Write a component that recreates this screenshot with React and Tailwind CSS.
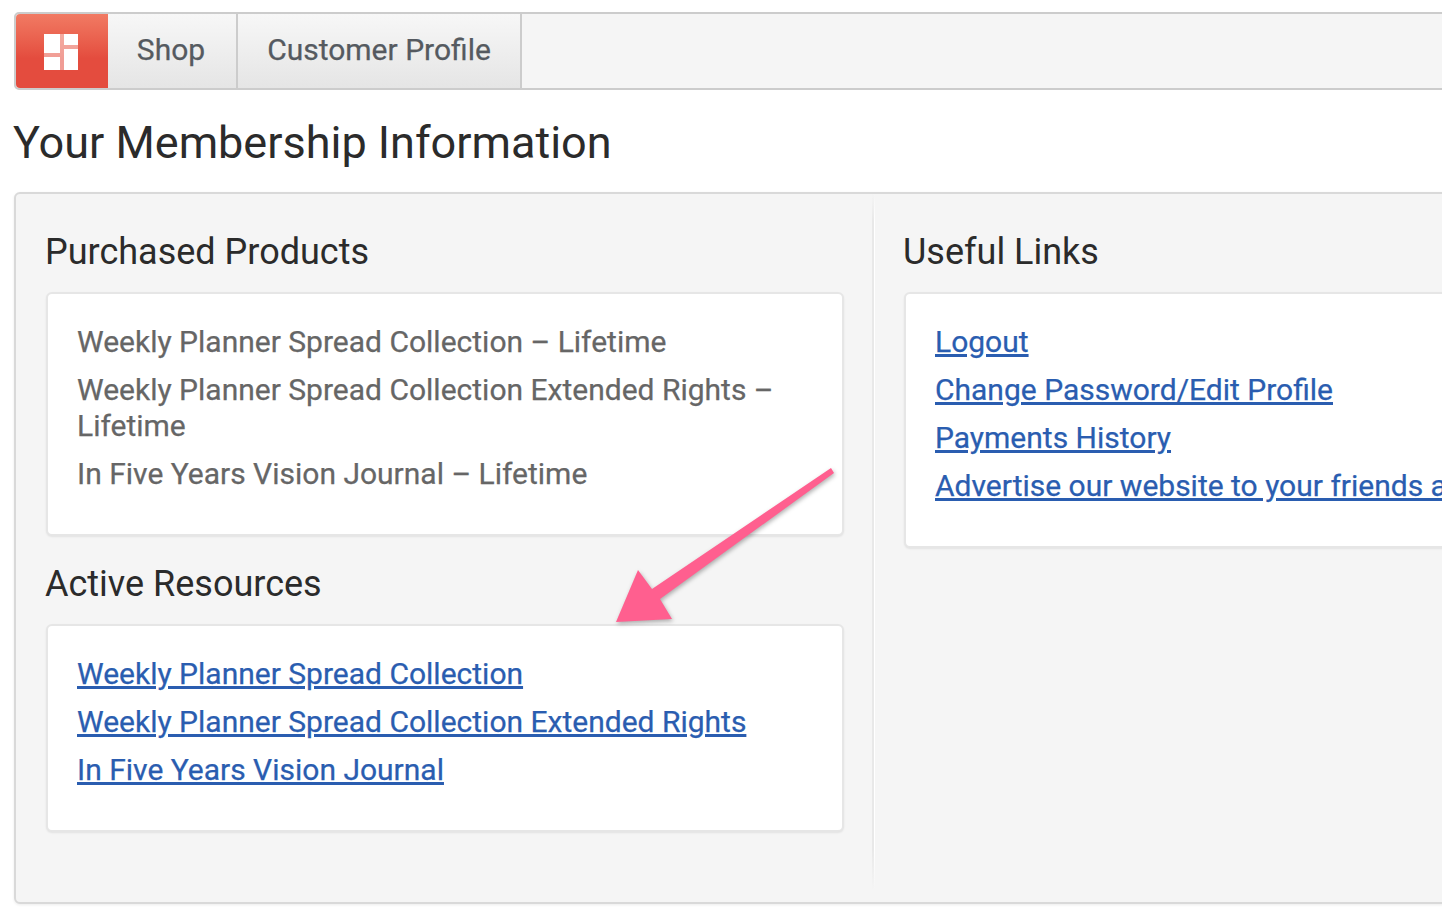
export default function App() {
  const linkCls = "text-[#2a5db0] underline";
  const cardCls = "rounded-[6px] border-2 border-[#e6e6e6] bg-white shadow-[0_1px_2px_rgba(0,0,0,0.08)] [-webkit-text-stroke:0.25px]";
  const headCls = "-ml-px h-[44px] text-[36px] leading-[44px] font-normal text-[#2b2b2b]";
  return (
    <div className="relative h-[924px] w-[1442px] overflow-hidden bg-white pl-[14px] pt-[12px] font-['Roboto',sans-serif]">
      <div className="w-[1500px]">
        <nav className="flex h-[78px] rounded-[5px] border-2 border-[#cccccc] bg-[#f5f5f5]">
          <a className="flex w-[92px] items-center justify-center rounded-l-[4px] bg-gradient-to-b from-[#f17a63] from-0% to-[#e44c3e] to-60%">
            <svg className="mr-[2px] mt-[2px]" width="34" height="36" viewBox="0 0 34 36">
              <rect x="16" y="0" width="4" height="36" fill="#fff" fillOpacity="0.45" />
              <rect x="0" y="19" width="16" height="4" fill="#fff" fillOpacity="0.45" />
              <rect x="20" y="11" width="14" height="4" fill="#fff" fillOpacity="0.45" />
              <rect x="0" y="0" width="16" height="19" fill="#fff" />
              <rect x="20" y="0" width="14" height="11" fill="#fff" />
              <rect x="0" y="23" width="16" height="13" fill="#fff" />
              <rect x="20" y="15" width="14" height="21" fill="#fff" />
            </svg>
          </a>
          <a className="flex w-[130px] items-center justify-center border-r-2 border-[#cccccc] bg-gradient-to-b from-[#f7f7f7] to-[#e5e5e5] pb-[4px] pr-[2px] text-[30px] text-[#555a60] [-webkit-text-stroke:0.25px]">Shop</a>
          <a className="flex w-[284px] items-center justify-center border-r-2 border-[#cccccc] bg-gradient-to-b from-[#f7f7f7] to-[#e5e5e5] pb-[4px] text-[30px] text-[#555a60] [-webkit-text-stroke:0.25px]">Customer Profile</a>
        </nav>
        <h1 className="-ml-px mt-[26px] h-[54px] text-[45px] leading-[54px] font-normal text-[#2b2b2b]">Your Membership Information</h1>
        <div className="mt-[22px] flex h-[712px] rounded-[6px] border-2 border-[#d9d9d9] bg-[#f5f5f5] shadow-[0_1px_3px_rgba(0,0,0,0.08)]">
          <section className="h-[696px] w-[856px] shrink-0 pl-[30px] pr-[28px]">
            <h2 className={"mt-[36px] " + headCls}>Purchased Products</h2>
            <div className={"mt-[18px] h-[244px] px-[29px] pt-[30px] text-[30px] leading-[36px] text-[#666666] " + cardCls}>
              <p className="mb-[12px]">Weekly Planner Spread Collection – Lifetime</p>
              <p className="mb-[12px]">Weekly Planner Spread Collection Extended Rights – Lifetime</p>
              <p>In Five Years Vision Journal – Lifetime</p>
            </div>
            <h2 className={"mt-[26px] " + headCls}>Active Resources</h2>
            <div className={"mt-[18px] h-[208px] px-[29px] pt-[30px] text-[30px] leading-[48px] " + cardCls}>
              <div className="-mt-[6px]">
                <div><a className={linkCls}>Weekly Planner Spread Collection</a></div>
                <div><a className={linkCls}>Weekly Planner Spread Collection Extended Rights</a></div>
                <div><a className={linkCls}>In Five Years Vision Journal</a></div>
              </div>
            </div>
          </section>
          <div className="flex h-[696px] shrink-0">
            <div className="w-[2px] bg-[linear-gradient(to_bottom,#f5f5f5,#e8e8e8_4%,#e8e8e8_94%,#f5f5f5)]" />
            <div className="w-px bg-[linear-gradient(to_bottom,#f5f5f5,#ffffff_4%,#ffffff_94%,#f5f5f5)]" />
          </div>
          <section className="flex-1 pl-[29px]">
            <h2 className={"mt-[36px] " + headCls}>Useful Links</h2>
            <div className={"mt-[18px] h-[256px] px-[29px] pt-[24px] text-[30px] leading-[48px] whitespace-nowrap " + cardCls}>
              <div><a className={linkCls}>Logout</a></div>
              <div><a className={linkCls}>Change Password/Edit Profile</a></div>
              <div><a className={linkCls}>Payments History</a></div>
              <div><a className={linkCls}>Advertise our website to your friends and family</a></div>
            </div>
          </section>
        </div>
      </div>
      <svg className="absolute left-[600px] top-[450px] drop-shadow-[1px_2px_2px_rgba(0,0,0,0.3)]" width="250" height="190" viewBox="600 450 250 190">
        <path d="M831 468 L834 473 L660 599 L672 619 L616 622 L638 570 L652 589 Z" fill="#ff5f8f" />
      </svg>
    </div>
  );
}
